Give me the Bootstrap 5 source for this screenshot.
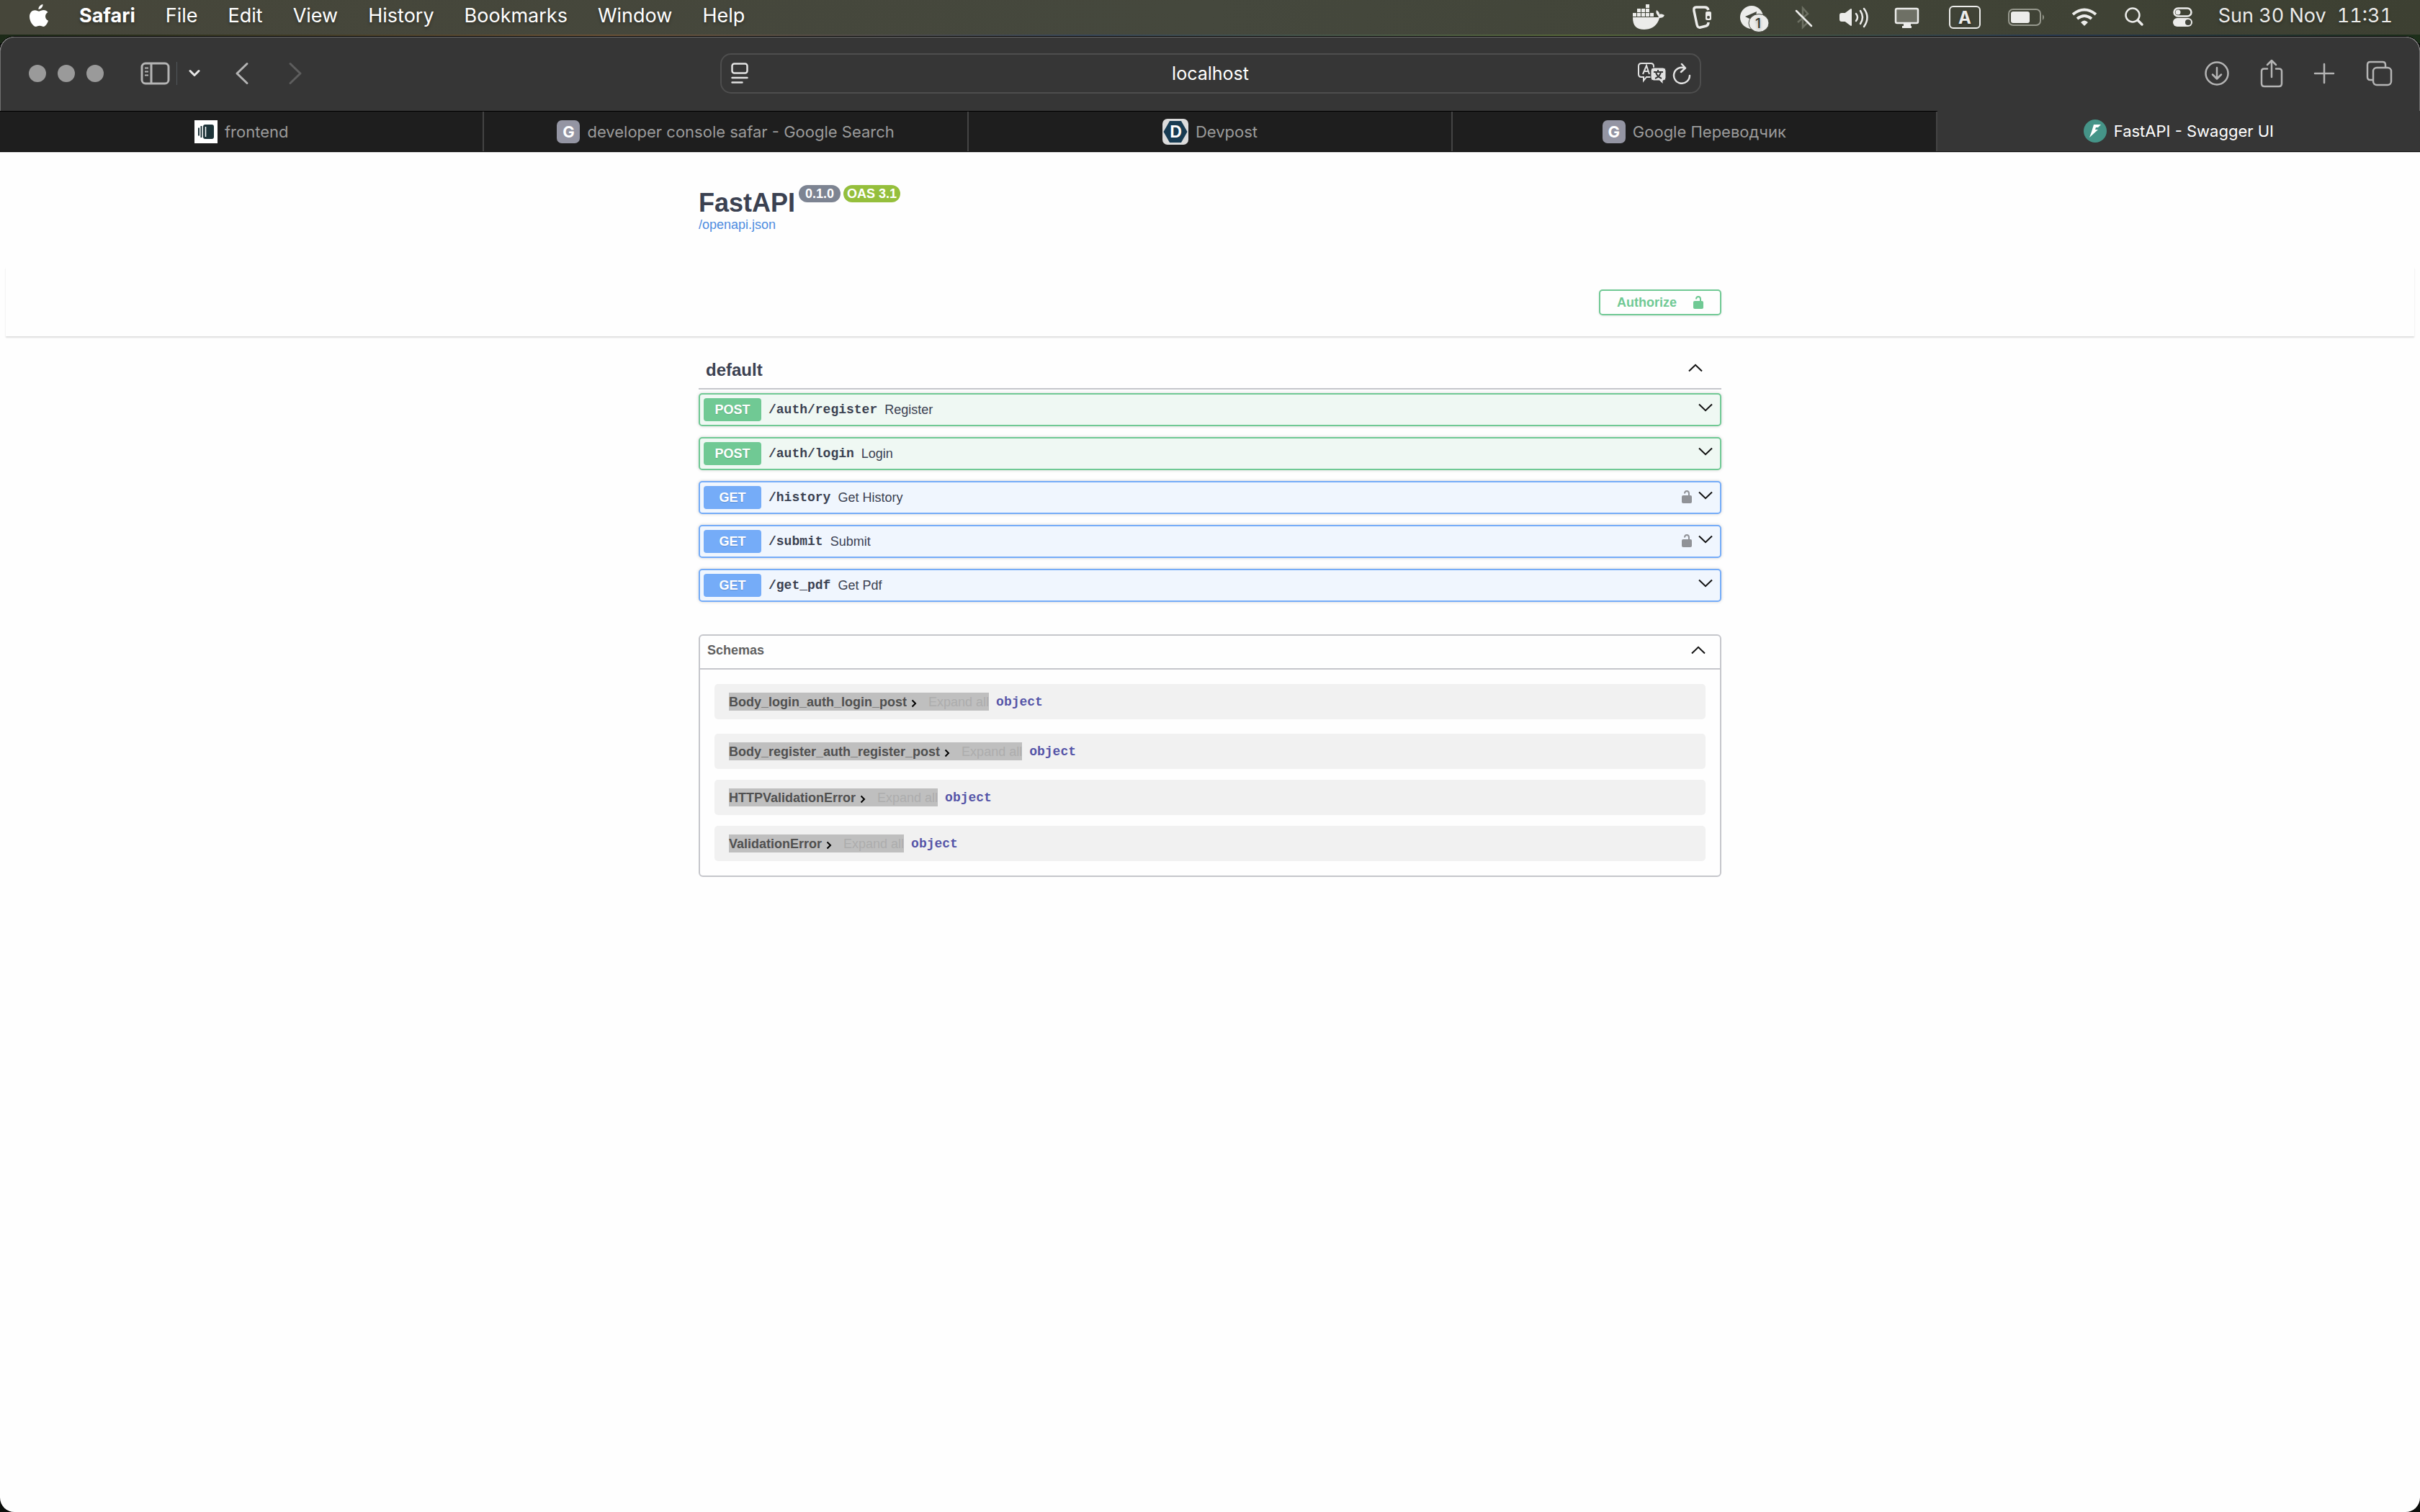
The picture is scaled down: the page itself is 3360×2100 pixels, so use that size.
<!DOCTYPE html>
<html lang="en">
<head>
<meta charset="utf-8">
<title>FastAPI - Swagger UI</title>
<meta name="viewport" content="width=device-width, initial-scale=1">
<link href="https://cdn.jsdelivr.net/npm/bootstrap@5.3.0/dist/css/bootstrap.min.css" rel="stylesheet">
<style>
  body { background: #10120f; font-family: "Liberation Sans", Arial, sans-serif; font-size: 18px; line-height: 24px; color: #3b4151; }
  svg { display: block; flex: none; }
  .desk { min-height: 100vh; background: linear-gradient(90deg, #1c2a18, #6b5237 25%, #39485a 45%, #57683a 65%, #2a3b52 85%, #1d2f1a) top / 100% 60px no-repeat #0d100d; }
  .ui-font { font-family: Inter, "Noto Sans", sans-serif; }

  .menu-strip { height: 48px; padding: 0 38px 0 40px; background: linear-gradient(90deg, #46463a, #45483d 50%, #3d4032); color: #fff; font-size: 27px; line-height: 44px; text-shadow: 0 2px 4px rgba(0,0,0,.35); }
  .menu-strip a { color: #fff; text-decoration: none; }
  .menu-list { gap: 42px; height: 44px; }
  .status-list { color: #ececea; gap: 20px; }
  .clock { gap: 15px; font-variant-numeric: tabular-nums; }

  .browser { margin-top: 3px; border-radius: 20px; overflow: hidden; background: #fefefe; box-shadow: 0 0 0 1px #000; }
  .chrome-bar { height: 103px; background: #363636; border: 1px solid #707070; border-bottom: 0; border-radius: 20px 20px 0 0; color: #b4b4b4; padding: 0 37px 2px 39px; }
  .chrome-bar button { background: none; border: 0; padding: 0; color: inherit; }
  .side { flex: 1 1 0; }
  .dot { width: 24px; height: 24px; border-radius: 50%; background: #9a9a9a; }
  .dots { margin-right: 51px; }
  .forward { margin-left: 54px; }
  .tool-gap { margin-left: 42px; }
  .address { width: 1362px; height: 56px; border: 2px solid #4e4e4e; border-radius: 15px; padding: 0 12px 0 13px; color: #e2e2e2; }
  .address input { background: none; border: 0; outline: 0; color: #fff; text-align: center; font-size: 25px; min-width: 0; padding: 0; }

  .tab-strip { height: 57px; background: #1e1e1e; border-top: 1px solid #000; border-bottom: 1px solid #000; font-size: 22px; }
  .tab-strip a { flex: 1 1 0; gap: 10px; color: #9b9b9b; text-decoration: none; border-right: 2px solid #444; }
  .tab-strip a.on { background: #363636; color: #fff; border-right: 0; margin-top: -1px; }
  .fav { width: 32px; height: 32px; border-radius: 7px; background: #9495a3; color: #fff; font-weight: 700; font-size: 22px; line-height: 32px; text-align: center; }

  .sheet { border-top: 1px solid #c8c8c8; min-height: 1889px; }
  .wrap { max-width: 1420px; margin: 0 auto; }
  .info { padding: 45px 0 49px; }
  .info h1 { font-size: 36px; line-height: 40px; font-weight: 700; color: #3b4151; margin: 5px 5px 0 0; }
  .pill { height: 24px; border-radius: 12px; font-size: 18px; line-height: 24px; font-weight: 700; color: #fff; padding: 0 9px; background: #7d8492; }
  .pill.oas { background: #95bf3c; padding: 0 5px; }
  .info a { color: #4d8ce0; text-decoration: none; line-height: 20px; }
  .scheme { margin: 0 8px; padding: 31px 0 29px; box-shadow: 0 2px 2px rgba(0,0,0,.13); }
  .auth-btn { width: 170px; height: 36px; border: 2px solid #70c994; border-radius: 5px; background: transparent; color: #70c994; font-weight: 700; padding: 0 23px; box-shadow: 0 1px 3px rgba(0,0,0,.1); }

  .tag-head { margin-top: 34px; padding: 0 26px 0 10px; height: 40px; border-bottom: 2px solid #c4c6cb; color: #3b4151; }
  .tag-head h2 { font-size: 24px; line-height: 28px; font-weight: 700; margin: 0 0 12px; }
  .tag-head svg { margin-bottom: 18px; }
  .ops { gap: 15px; padding-top: 5px; }
  .op { height: 46px; border: 2px solid #70c994; border-radius: 5px; padding: 5px 10px 5px 5px; background: #eff8f3; box-shadow: 0 0 4px rgba(0,0,0,.18); color: #3b4151; text-decoration: none; }
  .op.read { border-color: #75acf8; background: #f0f6fe; }
  .verb { width: 80px; height: 32px; border-radius: 4px; background: #70c994; color: #fff; font-weight: 700; line-height: 32px; text-align: center; text-shadow: 0 1px 1px rgba(0,0,0,.15); }
  .read .verb { background: #75acf8; }
  .mono { font-family: "Liberation Mono", monospace; font-weight: 700; }
  .path { margin: 0 10px; }
  .fold { margin-bottom: 6px; }
  .lock-mark { color: #909297; margin: 0 9px 2px 0; }

  .models { margin-top: 45px; border: 2px solid #c5c6cb; border-radius: 6px; }
  .models-head { height: 47px; padding: 0 20px 5px 10px; border-bottom: 2px solid #c5c6cb; }
  .models-head h2 { font-size: 18px; line-height: 24px; font-weight: 700; color: #606060; margin: 0; }
  .models-body { padding: 20px; gap: 15px; }
  .model { height: 49px; border-radius: 5px; background: #f1f1f1; padding: 0 20px; gap: 10px; }
  .model:first-child { margin-bottom: 5px; }
  .picked { height: 25px; background: #bfbfbf; color: #505050; border: 0; padding: 0; line-height: 24px; }
  .picked svg { margin: 4px 16px 0 6px; }
  .picked .more { color: #adadad; }
  .kind { color: #5555a8; }
</style>
</head>
<body>
<svg width="0" height="0" class="position-absolute" aria-hidden="true">
  <defs>
    <symbol id="up" viewBox="0 0 20 12"><path d="M1 10.500 10 1.800l9 8.700" fill="none" stroke="#111" stroke-width="2"/></symbol>
    <symbol id="down" viewBox="0 0 20 12"><path d="M1 1.500 10 10.200l9-8.700" fill="none" stroke="#111" stroke-width="2"/></symbol>
    <symbol id="next" viewBox="0 0 8 12"><path d="M1.500 1.500 6 6l-4.500 4.500" fill="none" stroke="#000" stroke-width="2"/></symbol>
    <symbol id="lock" viewBox="0 0 14 18"><path d="M4 4.500C4 2 5.300 1 7 1s3 1 3 3.500V8" fill="none" stroke="currentColor" stroke-width="2"/><rect y="7" width="14" height="11" rx="2" fill="currentColor"/></symbol>
  </defs>
</svg>
<div class="desk d-flex flex-column">
  <header class="menu-strip ui-font d-flex justify-content-between">
    <nav class="menu-list d-flex align-items-center">
      <svg width="28" height="32" viewBox="0 0 28 32"><path fill="#fff" d="M19.500 0c.3 3.300-2.700 7-6 7C13 3.800 16.300.5 19.500 0zM26.500 11c-2.200 1.300-3.500 3.200-3.500 5.800 0 3 1.700 5 4 6-1 3.200-3.800 8.200-6.600 8.200-2 0-2.900-1.200-5.300-1.200S11.500 31 9.800 31C6 31 1 23.500 1 17.200 1 11.500 4.600 8.200 8.500 8.200c2.400 0 4.300 1.500 5.800 1.500 1.400 0 3.500-1.600 6.400-1.600 2.200 0 4.400 1 5.800 2.900z"/></svg>
      <a href="#" class="fw-bold">Safari</a><a href="#">File</a><a href="#">Edit</a><a href="#">View</a><a href="#">History</a><a href="#">Bookmarks</a><a href="#">Window</a><a href="#">Help</a>
    </nav>
    <div class="status-list d-flex align-items-start">
      <svg width="800" height="48" viewBox="2260 0 800 48" fill="currentColor">
        <path d="M2267 24h36c-1-3-5-5-3-10 3 2 4 4 4 6 2-1 5 0 7 1-1 3-4 4-7 4-3 11-11 16-21 16-11 0-16-5-16-17z"/>
        <path d="M2267 18h5v5h-5zM2273 18h5v5h-5zM2279 18h5v5h-5zM2285 18h5v5h-5zM2291 18h5v5h-5zM2273 12h5v5h-5zM2279 12h5v5h-5zM2285 12h5v5h-5zM2285 6h5v5h-5z"/>
        <path d="M2372 14q-1-4-5-4h-12q-4 0-3 5l4 19q1 5 5 4l8-2q3-1 3-5" fill="none" stroke="currentColor" stroke-width="3.500"/><rect x="2368" y="16" width="8" height="12" rx="2"/><circle cx="2372" cy="24" r="2" fill="#41443a"/>
        <circle cx="2432" cy="24" r="16"/><path d="m2423 23 16-7-1 6-9 4z" fill="#41443a"/><ellipse cx="2442" cy="32" rx="14" ry="12.500" stroke="#41443a" stroke-width="1"/><text x="2441" y="39" font-size="19" font-weight="500" text-anchor="middle" fill="#33362c" font-family="Inter">1</text>
        <path d="m2496 31 14-12-7-8v27l7-7-13-12" fill="none" stroke="#6c6f62" stroke-width="2.500"/><path d="m2494 15 21 21" stroke="currentColor" stroke-width="2.500" stroke-linecap="round"/>
        <path d="M2557 19h5l8-6v22l-8-6h-5q-2 0-2-2v-6q0-2 2-2z" stroke="currentColor" stroke-width="2" stroke-linejoin="round"/><path d="M2577 19q4 5 0 10M2583 15q6 9 0 18M2588 12q9 12 0 25" fill="none" stroke="currentColor" stroke-width="2.500" stroke-linecap="round"/>
        <rect x="2632" y="12" width="31" height="20" rx="2" fill="#6e7065" stroke="currentColor" stroke-width="2.500"/><path d="M2643 33h10v3h1v3h-13v-3h2z"/>
        <rect x="2707" y="9" width="42" height="30" rx="5" fill="none" stroke="currentColor" stroke-width="2"/><text x="2728" y="33" font-size="24" font-weight="700" text-anchor="middle" font-family="Inter">A</text>
        <rect x="2789" y="13" width="44" height="22" rx="6" fill="none" stroke="#96988d" stroke-width="2"/><rect x="2792" y="16" width="26" height="16" rx="3"/><path d="M2836 20q4 4 0 8z" fill="#96988d"/>
        <path d="M2878 20q16-13 32 0M2884 26q10-8 20 0" fill="none" stroke="currentColor" stroke-width="4"/><path d="m2894 36-5-5q5-5 10 0z"/>
        <circle cx="2961" cy="21" r="9.500" fill="none" stroke="currentColor" stroke-width="2.500"/><path d="m2968 28 6 6" stroke="currentColor" stroke-width="3.500" stroke-linecap="round"/>
        <rect x="3018.500" y="11.500" width="24" height="11" rx="5.500" fill="none" stroke="currentColor" stroke-width="2.500"/><circle cx="3024" cy="17" r="3.500"/><rect x="3017" y="25" width="27" height="12" rx="6"/><circle cx="3038" cy="31" r="4" fill="#41443a"/>
      </svg>
      <div class="clock d-flex text-nowrap"><span>Sun 30 Nov</span><time>11:31</time></div>
    </div>
  </header>

  <div class="browser flex-grow-1">
    <div class="chrome-bar ui-font d-flex align-items-center">
      <div class="side d-flex align-items-center">
        <div class="dots d-flex gap-3"><i class="dot"></i><i class="dot"></i><i class="dot"></i></div>
        <button type="button" aria-label="Sidebar"><svg width="42" height="32" viewBox="0 0 42 32" fill="none" stroke="currentColor" stroke-width="3"><rect x="2" y="2" width="37" height="28" rx="5"/><path d="M15 2v28"/><path d="M6 8.500h5M6 13.500h5M6 18.500h5" stroke-width="2"/></svg></button>
        <div class="vr ms-2 me-3 bg-secondary opacity-50"></div>
        <button type="button" aria-label="Tab groups"><svg width="16" height="12" viewBox="0 0 16 12" fill="none" stroke="#e6e6e6" stroke-width="3" stroke-linecap="round" stroke-linejoin="round"><path d="m2 2.500 6 6 6-6"/></svg></button>
        <button type="button" class="ms-5" aria-label="Back"><svg width="20" height="32" viewBox="0 0 20 32" fill="none" stroke="currentColor" stroke-width="3" stroke-linecap="round" stroke-linejoin="round"><path d="M17 2.500 3 16l14 13.500"/></svg></button>
        <button type="button" class="forward" aria-label="Forward"><svg width="20" height="32" viewBox="0 0 20 32" fill="none" stroke="#5e5e5e" stroke-width="3" stroke-linecap="round" stroke-linejoin="round"><path d="M3 2.500 17 16 3 29.500"/></svg></button>
      </div>
      <div class="address d-flex align-items-center">
        <svg width="24" height="30" viewBox="0 0 24 30" fill="none" stroke="currentColor" stroke-width="2.500" stroke-linecap="round"><rect x="1.500" y="1.500" width="21" height="13" rx="3"/><path d="M1.500 21h21M1.500 27.500h14"/></svg>
        <input class="flex-grow-1 ps-5" type="text" value="localhost" aria-label="Address">
        <button type="button" aria-label="Translate"><svg width="40" height="32" viewBox="0 0 40 32"><path d="M5 2h13q4 0 4 4v12q0 3-4 3h-6l-4 5v-5H5q-4 0-4-4V6q0-4 4-4z" fill="none" stroke="currentColor" stroke-width="2"/><path d="m7 17 5-12 4 12M9 13h6" fill="none" stroke="currentColor" stroke-width="2"/><path d="M22 8h13q4 0 4 4v10q0 4-4 4v5l-5-5h-8q-4 0-4-4V12q0-4 4-4z" fill="currentColor" stroke="#363636"/><path d="M22 14h13M28 11v3M24 23q7-3 8-9M25 14q1 6 8 9" fill="none" stroke="#363636" stroke-width="2"/></svg></button>
        <button type="button" class="ms-2" aria-label="Reload"><svg width="26" height="30" viewBox="0 0 26 30" fill="none" stroke="currentColor" stroke-width="2.500" stroke-linecap="round" stroke-linejoin="round"><path d="M17 7.500A11 11 0 1 0 24 18M13 2l5 5.500-6 5.500"/></svg></button>
      </div>
      <div class="side d-flex align-items-center justify-content-end">
        <button type="button" aria-label="Downloads"><svg width="36" height="36" viewBox="0 0 36 36" fill="none" stroke="currentColor" stroke-width="2.500" stroke-linecap="round" stroke-linejoin="round"><circle cx="18" cy="18" r="15.500"/><path d="M18 10v15M12 19.500l6 6 6-6"/></svg></button>
        <button type="button" class="tool-gap" aria-label="Share"><svg width="32" height="40" viewBox="0 0 32 40" fill="none" stroke="currentColor" stroke-width="2.500" stroke-linecap="round" stroke-linejoin="round"><path d="M10 13.500H5.500Q2 13.500 2 17v17q0 4 4 4h20q4 0 4-4V17q0-3.500-4-3.500h-4M16 25V2M10 8l6-6 6 6"/></svg></button>
        <button type="button" class="tool-gap" aria-label="New tab"><svg width="30" height="30" viewBox="0 0 30 30" stroke="currentColor" stroke-width="2.500" stroke-linecap="round"><path d="M15 2v26M2 15h26"/></svg></button>
        <button type="button" class="tool-gap" aria-label="Tab overview"><svg width="38" height="38" viewBox="0 0 38 38" fill="none" stroke="currentColor" stroke-width="2.500"><rect x="11" y="11" width="25" height="24" rx="5"/><path d="M11 28H7q-4 0-4-4V7q0-4 4-4h17q4 0 4 4v4"/></svg></button>
      </div>
    </div>
    <nav class="tab-strip ui-font d-flex">
      <a href="#" class="d-flex align-items-center justify-content-center"><svg width="32" height="32" viewBox="0 0 32 32"><path fill="#fff" d="M0 0h32v32H0z"/><rect x="12" y="6" width="15" height="20" rx="3" fill="#1d3338"/><path d="M9.500 8v16M6 10.500v11" stroke="#1d3338" stroke-width="2"/><path d="M15.500 9v14" stroke="#fff" stroke-width="1.500"/></svg>frontend</a>
      <a href="#" class="d-flex align-items-center justify-content-center"><span class="fav">G</span>developer console safar - Google Search</a>
      <a href="#" class="d-flex align-items-center justify-content-center"><svg width="36" height="36" viewBox="0 0 36 36"><rect width="36" height="36" rx="7" fill="#dcdcdc"/><path d="M10 3h16l8.500 15L26 33H10L1.500 18z" fill="#173b52"/><text x="18.500" y="26" text-anchor="middle" font-family="Liberation Sans" font-weight="700" font-size="23" fill="#fff">D</text></svg>Devpost</a>
      <a href="#" class="d-flex align-items-center justify-content-center"><span class="fav">G</span>Google Переводчик</a>
      <a href="#" class="on d-flex align-items-center justify-content-center" aria-current="page"><svg width="32" height="32" viewBox="0 0 32 32"><circle cx="16" cy="16" r="16" fill="#459488"/><path d="M14 7h10l-4 4h-3l-1 3h4L8 25l3-8z" fill="#fff"/></svg>FastAPI - Swagger UI</a>
    </nav>

    <main class="sheet">
      <section class="info wrap">
        <div class="d-flex align-items-start">
          <h1>FastAPI</h1><span class="pill">0.1.0</span><span class="pill oas ms-1">OAS 3.1</span>
        </div>
        <a href="#" class="d-block">/openapi.json</a>
      </section>
      <section class="scheme">
        <div class="wrap d-flex justify-content-end">
          <button type="button" class="auth-btn d-flex align-items-center justify-content-between">Authorize <svg width="14" height="18"><use href="#lock"/></svg></button>
        </div>
      </section>
      <section class="wrap">
        <div class="tag-head d-flex align-items-center justify-content-between"><h2>default</h2><svg width="20" height="12"><use href="#up"/></svg></div>
        <div class="ops d-flex flex-column">
          <a href="#" class="op d-flex align-items-center"><span class="verb">POST</span><span class="path mono">/auth/register</span><span class="flex-grow-1">Register</span><svg class="fold" width="20" height="12"><use href="#down"/></svg></a>
          <a href="#" class="op d-flex align-items-center"><span class="verb">POST</span><span class="path mono">/auth/login</span><span class="flex-grow-1">Login</span><svg class="fold" width="20" height="12"><use href="#down"/></svg></a>
          <a href="#" class="op read d-flex align-items-center"><span class="verb">GET</span><span class="path mono">/history</span><span class="flex-grow-1">Get History</span><svg class="lock-mark" width="14" height="18"><use href="#lock"/></svg><svg class="fold" width="20" height="12"><use href="#down"/></svg></a>
          <a href="#" class="op read d-flex align-items-center"><span class="verb">GET</span><span class="path mono">/submit</span><span class="flex-grow-1">Submit</span><svg class="lock-mark" width="14" height="18"><use href="#lock"/></svg><svg class="fold" width="20" height="12"><use href="#down"/></svg></a>
          <a href="#" class="op read d-flex align-items-center"><span class="verb">GET</span><span class="path mono">/get_pdf</span><span class="flex-grow-1">Get Pdf</span><svg class="fold" width="20" height="12"><use href="#down"/></svg></a>
        </div>
        <div class="models">
          <div class="models-head d-flex align-items-center justify-content-between"><h2>Schemas</h2><svg width="20" height="12"><use href="#up"/></svg></div>
          <div class="models-body d-flex flex-column">
            <div class="model d-flex align-items-center"><button type="button" class="picked d-flex align-items-center"><b>Body_login_auth_login_post</b><svg width="8" height="12"><use href="#next"/></svg><span class="more">Expand all</span></button><span class="kind mono">object</span></div>
            <div class="model d-flex align-items-center"><button type="button" class="picked d-flex align-items-center"><b>Body_register_auth_register_post</b><svg width="8" height="12"><use href="#next"/></svg><span class="more">Expand all</span></button><span class="kind mono">object</span></div>
            <div class="model d-flex align-items-center"><button type="button" class="picked d-flex align-items-center"><b>HTTPValidationError</b><svg width="8" height="12"><use href="#next"/></svg><span class="more">Expand all</span></button><span class="kind mono">object</span></div>
            <div class="model d-flex align-items-center"><button type="button" class="picked d-flex align-items-center"><b>ValidationError</b><svg width="8" height="12"><use href="#next"/></svg><span class="more">Expand all</span></button><span class="kind mono">object</span></div>
          </div>
        </div>
      </section>
    </main>
  </div>
</div>
<script src="https://cdn.jsdelivr.net/npm/bootstrap@5.3.0/dist/js/bootstrap.bundle.min.js"></script>
</body>
</html>
